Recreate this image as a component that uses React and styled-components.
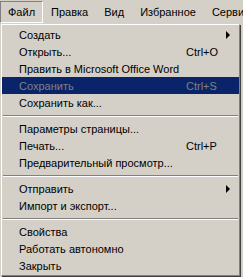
import styled, { createGlobalStyle } from "styled-components";

const GlobalStyle = createGlobalStyle`
  html, body {
    margin: 0;
    padding: 0;
    background: #d4d0c8;
  }
  body {
    font-family: "Liberation Sans", Arial, sans-serif;
    font-size: 11px;
    color: #000;
  }
`;

const menuBar = ["Файл", "Правка", "Вид", "Избранное", "Сервис"];

const fileMenu = [
  { label: "Создать", sub: true },
  { label: "Открыть...", key: "Ctrl+O" },
  { label: "Править в Microsoft Office Word" },
  { label: "Сохранить", key: "Ctrl+S", active: true, disabled: true },
  { label: "Сохранить как..." },
  { sep: true },
  { label: "Параметры страницы..." },
  { label: "Печать...", key: "Ctrl+P" },
  { label: "Предварительный просмотр..." },
  { sep: true },
  { label: "Отправить", sub: true },
  { label: "Импорт и экспорт..." },
  { sep: true },
  { label: "Свойства" },
  { label: "Работать автономно" },
  { label: "Закрыть" },
];

const Screen = styled.div`
  width: 243px;
  height: 277px;
  overflow: hidden;
  background: #d4d0c8;
`;

const Bar = styled.div`
  display: flex;
  height: 22px;
  padding-top: 1px;
  white-space: nowrap;
`;

const BarItem = styled.div`
  display: flex;
  align-items: center;
  height: 20px;
  padding: 0 7px;
  border: 1px solid;
  border-color: ${(p) =>
    p.$pressed ? "#808080 #fff #fff #808080" : "transparent"};
`;

const Body = styled.div`
  display: flex;
`;

/* classic raised frame: outer ring via shadow, inner via border */
const Dropdown = styled.div`
  width: 237px;
  margin: 1px 0 0 1px;
  padding: 1px 0;
  border: 1px solid;
  border-color: #fff #808080 #808080 #fff;
  box-shadow: -1px -1px 0 #d4d0c8, 1px 1px 0 #404040;
`;

const Item = styled.div`
  display: grid;
  grid-template-columns: 167px 1fr 13px;
  align-items: center;
  height: 17px;
  padding-left: 17px;
  white-space: nowrap;
  background: ${(p) => (p.$active ? "#0a246a" : "transparent")};
  color: ${(p) => (p.$disabled ? "#808080" : "#000")};
`;

const Shortcut = styled.span``;

const Arrow = styled.span`
  width: 0;
  height: 0;
  border-top: 4px solid transparent;
  border-bottom: 4px solid transparent;
  border-left: 4px solid #000;
  justify-self: start;
`;

const Separator = styled.div`
  height: 9px;
  display: flex;
  align-items: center;
  padding: 0 1px;

  &::before {
    content: "";
    flex: 1;
    height: 0;
    border-top: 1px solid #808080;
    border-bottom: 1px solid #fff;
  }
`;

export default function App() {
  return (
    <Screen>
      <GlobalStyle />
      <Bar>
        {menuBar.map((name, i) => (
          <BarItem key={name} $pressed={i === 0}>
            {name}
          </BarItem>
        ))}
      </Bar>
      <Body>
        <Dropdown>
          {fileMenu.map((it, i) =>
            it.sep ? (
              <Separator key={i} />
            ) : (
              <Item key={i} $active={it.active} $disabled={it.disabled}>
                <span>{it.label}</span>
                <Shortcut>{it.key}</Shortcut>
                {it.sub ? <Arrow /> : <span />}
              </Item>
            )
          )}
        </Dropdown>
      </Body>
    </Screen>
  );
}
